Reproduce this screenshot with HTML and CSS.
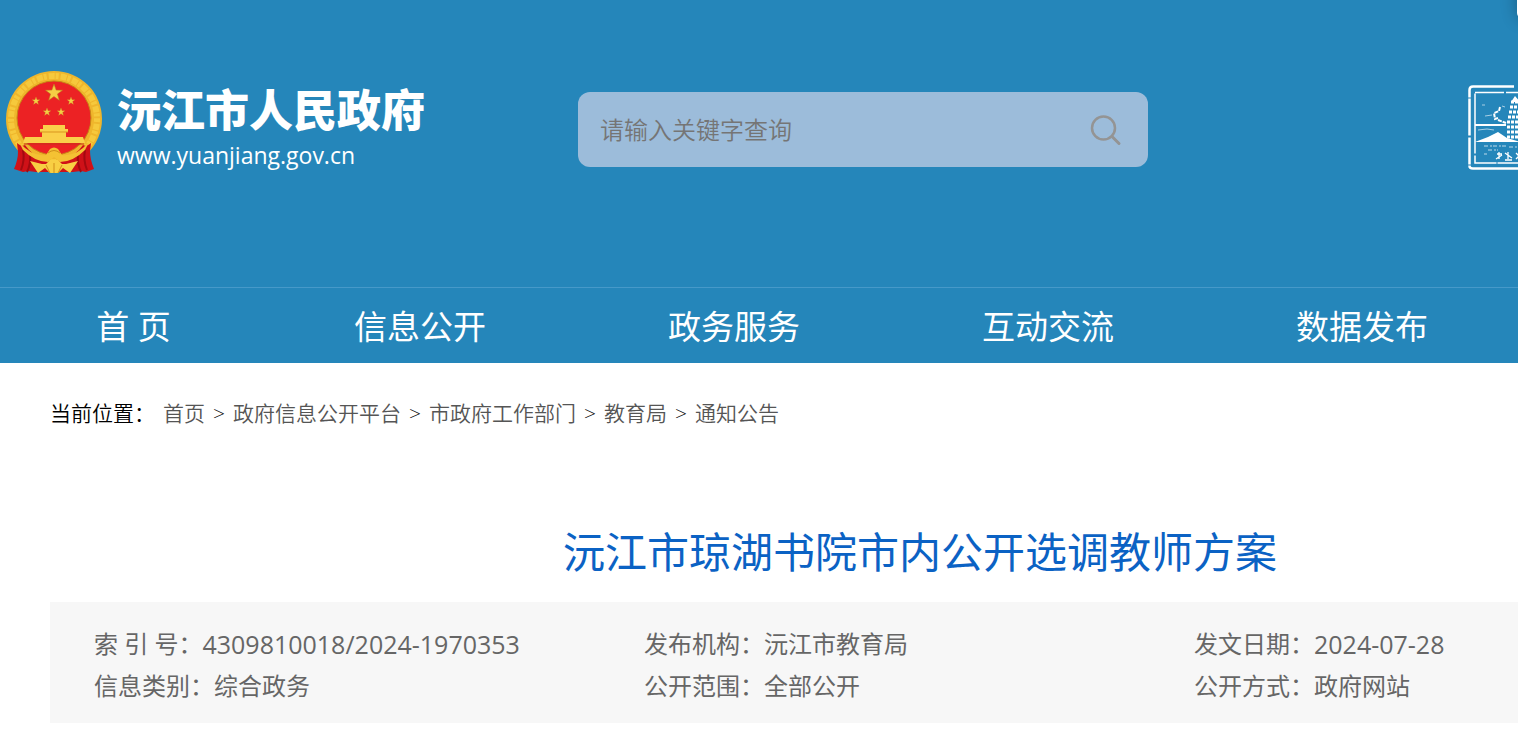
FILE: index.html
```html
<!DOCTYPE html>
<html lang="zh-CN">
<head>
<meta charset="utf-8">
<title>沅江市琼湖书院市内公开选调教师方案</title>
<link rel="stylesheet" href="styles.css">
</head>
<body>
<div class="page">
  <header class="header">
    <div class="masthead">
      <a class="brand" href="#">
        <svg class="emblem" viewBox="0 0 98 104" aria-hidden="true">
          <defs>
            <polygon id="star" points="0,-10 2.4,-3.2 9.5,-3.1 3.8,1.2 5.9,8.1 0,4 -5.9,8.1 -3.8,1.2 -9.5,-3.1 -2.4,-3.2"/>
          </defs>
          <circle cx="49" cy="49" r="48" fill="#efb62c"/>
          <circle cx="49" cy="49" r="43" fill="none" stroke="#f6c93c" stroke-width="6" stroke-dasharray="3 2 6 1"/>
          <path d="M12 73q4 4 8 2 8 12 22 15l7 1 7-1q14-3 22-15 4 2 8-2l-1 8q0 8 4 18l-8 3-5-1-8 1H31l-8-1-5 1-9-3q4-9 4-17z" fill="#cf1118"/>
          <path d="M18 80q2 10-2 20M25 85q1 9-3 17M80 80q-2 10 2 20M73 85q-1 9 3 17" fill="none" stroke="#a30a10" stroke-width="2"/>
          <circle cx="49" cy="48" r="37" fill="#ec2224" stroke="#c98516"/>
          <g fill="#f5cf45" stroke="#b97d1c" stroke-width=".6">
            <use href="#star" transform="translate(49 23) scale(.9)"/>
            <use href="#star" transform="translate(31 31) scale(.42)"/>
            <use href="#star" transform="translate(66 31) scale(.42)"/>
            <use href="#star" transform="translate(42 42) scale(.42)"/>
            <use href="#star" transform="translate(56 42) scale(.42)"/>
          </g>
          <path d="M38 55h22v4h3v3h-2v5h17l2 6H18l2-6h17v-5h-2v-3h3z" fill="#fad04a"/>
          <path d="M35 62h28" stroke="#d9951f"/>
          <path d="M19 74h60" stroke="#c5301a"/>
          <path d="M14 72q13 15 27 13l4-6q4-3 8 0l4 6q14 2 27-13l-4 8q-12 12-25 12l-6-5-6 5q-13 0-25-12z" fill="#f4c233"/>
          <path d="M25 91l12 3h4l4-4h8l4 4h4l12-3-8 12-7-5-5 5h-8l-5-5-7 5z" fill="#f8cf43"/>
          <path d="M43 83q6-5 12 0M45 103l-4-8M53 103l4-8M49 103V93" fill="none" stroke="#d08e1a"/>
        </svg>
        <span class="brand-text">
          <strong class="brand-name">沅江市人民政府</strong>
          <span class="brand-url">www.yuanjiang.gov.cn</span>
        </span>
      </a>
      <form class="search" role="search">
        <input class="search-input" type="text" aria-label="关键字" placeholder="请输入关键字查询">
        <button class="search-button" type="button" aria-label="查询">
          <svg class="search-icon" viewBox="0 0 32 32" fill="none" stroke="#949494" stroke-width="2.5" stroke-linecap="round"><circle cx="13.500" cy="14" r="11.500"/><path d="M22 22.500 29 29.500" stroke-width="3"/></svg>
        </button>
      </form>
      <svg class="seal" viewBox="0 0 100 86" aria-hidden="true">
        <g fill="none" stroke="#fff">
          <path d="M46 1.500H5Q1.500 1.500 1.500 5V81Q1.500 83.500 5 83.500H98" stroke-width="2.500" stroke-dasharray="54 1 37 2 27 1"/>
          <path d="M98 7.500H7V78H98" stroke-width="1.500" stroke-dasharray="60 2 29 1"/>
          <path d="M7 40h31" stroke-width="2"/>
          <path d="M10 45l9-1 7 1M14 20h3M17 31l7-1M34 21l3 1" stroke-width="1" opacity=".6"/>
          <path d="M32 22l-1 4-5 2 1 6 3-1M30 35l8 3" stroke-width="2" stroke-dasharray="4 1"/>
          <path d="M16 61h22M20 65h10M16 69h3M41 62h18" stroke-dasharray="4 2 2 1" opacity=".7"/>
          <path d="M29 69h5M31 67v7M28 74l6-4M37 68l7 5M40 67v7M37 75h7M48 68l6 6M54 68l-6 6" stroke-width="1.300"/>
          <path d="M43 17h8M42 22h10M41 27h12M40 32h14M39 37h16M39 42h16M39 47h16M39 52h16" stroke-width="3" stroke-dasharray="3 1"/>
        </g>
        <path d="M7 57l13-5 10-5 9 6 14 4zM47 11l5 6H43z" fill="#fff"/>
      </svg>
    </div>
    <nav class="nav" aria-label="主导航">
      <a class="nav-home" href="#">首 页</a>
      <a href="#">信息公开</a>
      <a href="#">政务服务</a>
      <a href="#">互动交流</a>
      <a href="#">数据发布</a>
    </nav>
  </header>
  <main class="content">
    <nav class="crumbs" aria-label="当前位置">
      <span>当前位置：</span>
      <a href="#">首页</a><span>&gt;</span>
      <a href="#">政府信息公开平台</a><span>&gt;</span>
      <a href="#">市政府工作部门</a><span>&gt;</span>
      <a href="#">教育局</a><span>&gt;</span>
      <a href="#">通知公告</a>
    </nav>
    <h1 class="title">沅江市琼湖书院市内公开选调教师方案</h1>
    <dl class="meta">
      <div><dt>索 引 号：</dt><dd class="number">4309810018/2024-1970353</dd></div>
      <div><dt>发布机构：</dt><dd>沅江市教育局</dd></div>
      <div><dt>发文日期：</dt><dd class="number">2024-07-28</dd></div>
      <div><dt>信息类别：</dt><dd>综合政务</dd></div>
      <div><dt>公开范围：</dt><dd>全部公开</dd></div>
      <div><dt>公开方式：</dt><dd>政府网站</dd></div>
    </dl>
  </main>
</div>
<div class="floating-panel" aria-hidden="true"></div>
</body>
</html>
```
FILE: styles.css
```css
* {
  box-sizing: border-box;
}

body {
  margin: 0;
  overflow: hidden;
  background: #fff;
  color: #000;
  font-family: "Open Sans", "Noto Sans CJK SC", sans-serif;
}

a {
  color: inherit;
  text-decoration: none;
}

.page {
  min-width: 1840px;
}

.header {
  background: #2586ba;
  color: #fff;
}

.masthead {
  display: flex;
  align-items: flex-start;
  padding: 70px 0 113px 5px;
}

.brand {
  display: flex;
  gap: 14px;
  width: 573px;
}

.emblem {
  width: 98px;
  height: 104px;
}

.brand-text {
  display: flex;
  flex-direction: column;
  padding-top: 12px;
}

.brand-name {
  font-size: 44px;
  font-weight: 900;
  line-height: 56px;
}

.brand-url {
  font-size: 23px;
  line-height: 34px;
}

.search {
  display: flex;
  align-items: center;
  width: 570px;
  height: 75px;
  margin: 22px 0 3px;
  padding: 0 26px 0 22px;
  border-radius: 12px;
  background: #9cbcda;
}

.search-input {
  flex: 1;
  padding: 0;
  border: 0;
  outline: 0;
  background: transparent;
  font: 350 24px/36px "Open Sans", "Noto Sans CJK SC", sans-serif;
}

.search-input::placeholder {
  color: #757575;
  opacity: 1;
}

.search-button {
  padding: 0;
  border: 0;
  background: transparent;
}

.search-icon {
  display: block;
  width: 32px;
  height: 32px;
}

.seal {
  width: 100px;
  height: 86px;
  margin: 15px 0 0 320px;
}

.nav {
  display: flex;
  padding-top: 2px;
  border-top: 1px solid #4699c9;
  font-size: 33px;
  line-height: 73px;
  text-align: center;
}

.nav a {
  width: 314px;
}

.nav .nav-home {
  width: 263px;
  padding-left: 4px;
}

.content {
  padding: 32px 50px;
}

.crumbs {
  display: flex;
  gap: 8px;
  font-size: 21px;
  line-height: 36px;
  font-weight: 350;
}

.crumbs a {
  color: #555;
}

.title {
  margin: 88px 0 17px;
  color: #0b62c4;
  font-size: 42px;
  font-weight: 400;
  line-height: 66px;
  text-align: center;
}

.meta {
  display: grid;
  grid-template-columns: repeat(3, 550px);
  margin: 0;
  padding: 21px 44px 16px;
  background: #f7f7f7;
  color: #666;
  font-size: 24px;
  line-height: 42px;
}

.meta div {
  display: flex;
}

.meta dd {
  margin: 0;
}

.meta .number {
  font-size: 25px;
}

.floating-panel {
  position: absolute;
  top: -20px;
  right: -99px;
  width: 100px;
  height: 39px;
  border-radius: 6px;
  background: #fff;
  box-shadow: 0 0 16px rgba(0, 0, 0, 0.3);
}
```
